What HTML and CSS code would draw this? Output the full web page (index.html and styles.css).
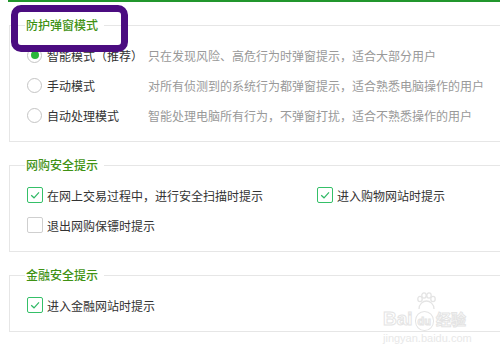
FILE: index.html
```html
<!DOCTYPE html>
<html lang="zh-CN">
<head>
  <meta charset="UTF-8">
  <meta name="viewport" content="width=device-width, initial-scale=1.0">
  <title>弹窗设置</title>
  <link rel="stylesheet" href="styles.css">
</head>
<body>
  <div id="page">
    <div class="topbar"></div>

    <fieldset class="group">
      <legend>防护弹窗模式</legend>
      <div class="row">
        <span class="radio on"></span>
        <span class="label">智能模式（推荐）</span>
        <span class="desc">只在发现风险、高危行为时弹窗提示，适合大部分用户</span>
      </div>
      <div class="row">
        <span class="radio"></span>
        <span class="label">手动模式</span>
        <span class="desc">对所有侦测到的系统行为都弹窗提示，适合熟悉电脑操作的用户</span>
      </div>
      <div class="row">
        <span class="radio"></span>
        <span class="label">自动处理模式</span>
        <span class="desc">智能处理电脑所有行为，不弹窗打扰，适合不熟悉操作的用户</span>
      </div>
    </fieldset>

    <fieldset class="group">
      <legend>网购安全提示</legend>
      <div class="row">
        <div class="item wide">
          <span class="check on"><svg width="14" height="14" viewBox="0 0 14 14"><path d="M3.2 7.2 L6 9.8 L11 4.4" fill="none" stroke="#2fb865" stroke-width="1.2"/></svg></span>
          在网上交易过程中，进行安全扫描时提示
        </div>
        <div class="item">
          <span class="check on"><svg width="14" height="14" viewBox="0 0 14 14"><path d="M3.2 7.2 L6 9.8 L11 4.4" fill="none" stroke="#2fb865" stroke-width="1.2"/></svg></span>
          进入购物网站时提示
        </div>
      </div>
      <div class="row">
        <div class="item">
          <span class="check"></span>
          退出网购保镖时提示
        </div>
      </div>
    </fieldset>

    <fieldset class="group">
      <legend>金融安全提示</legend>
      <div class="row">
        <div class="item">
          <span class="check on"><svg width="14" height="14" viewBox="0 0 14 14"><path d="M3.2 7.2 L6 9.8 L11 4.4" fill="none" stroke="#2fb865" stroke-width="1.2"/></svg></span>
          进入金融网站时提示
        </div>
      </div>
    </fieldset>

    <!-- 标注框 -->
    <div class="mark"></div>

    <!-- 水印 -->
    <div class="watermark">
      <svg class="paw" width="30" height="18" viewBox="0 0 30 18">
        <g fill="none" stroke="#e4e4e4" stroke-width="1.3">
          <ellipse cx="9" cy="7" rx="2.2" ry="2.6"/>
          <ellipse cx="13" cy="3.5" rx="2.2" ry="2.6"/>
          <ellipse cx="18" cy="3.5" rx="2.2" ry="2.6"/>
          <ellipse cx="22" cy="7" rx="2.2" ry="2.6"/>
          <path d="M8 17 C8 12 12 9 15.5 9 C19 9 23 12 23 17"/>
        </g>
      </svg>
      <div class="wm-line"><span class="wm-bai">Bai</span><span class="wm-du">du</span><span class="wm-cn">经验</span></div>
      <div class="wm-url">jingyan.baidu.com</div>
    </div>
  </div>
</body>
</html>
```

FILE: styles.css
```css
*{margin: 0; padding: 0; box-sizing: border-box;}

body{
  width: 500px;
  height: 350px;
  overflow: hidden;
  background: #fff;
  font-family: "Microsoft YaHei", "Noto Sans CJK SC", sans-serif;
  font-size: 12px;
  color: #333;
}

#page{
  position: relative;
  width: 540px;
  padding-left: 8px;
}

.topbar{
  height: 2px;
  background-color: #21962d;
  margin-bottom: 16px;
}

.group{
  margin: 0 0 16px 1px;
  border: 1px solid #e6e6e6;
  padding: 8px 0 11px 17px;
}

.group legend{
  margin-left: -2px;
  padding: 0 6px 0 1px;
  line-height: 14px;
  color: #3f9214;
  font-weight: 500;
}

.row{
  height: 30px;
  display: flex;
  align-items: center;
}

.radio{
  width: 15px;
  height: 15px;
  border: 1px solid #c4c4c4;
  border-radius: 50%;
  margin-right: 5px;
  display: flex;
  justify-content: center;
  align-items: center;
}

.radio.on::after{
  content: "";
  width: 8px;
  height: 8px;
  border-radius: 50%;
  background-color: #2bb53b;
}

.label{
  width: 101px;
}

.desc{
  color: #999;
}

.item{
  display: flex;
  align-items: center;
}

.item.wide{
  width: 290px;
}

.check{
  width: 16px;
  height: 16px;
  border: 1px solid #cfcfcf;
  border-radius: 2px;
  margin-right: 4px;
  display: flex;
  justify-content: center;
  align-items: center;
}

.check.on{
  border-color: #35c068;
}

.mark{
  position: absolute;
  left: 11px;
  top: 5px;
  width: 117px;
  height: 47px;
  border: 7px solid #4b0c80;
  border-radius: 10px;
}

.watermark{
  position: absolute;
  left: 383px;
  top: 292px;
  width: 100px;
  color: #fff;
}

.paw{
  display: block;
  margin-left: 28px;
}

.wm-line{
  display: flex;
  align-items: baseline;
  line-height: 18px;
  font-family: "Liberation Sans", sans-serif;
  font-weight: bold;
  -webkit-text-stroke: 1px #e4e4e4;
}

.wm-bai{
  font-size: 19px;
}

.wm-du{
  font-size: 11px;
  border: 1px solid #e4e4e4;
  border-radius: 50%;
  padding: 0 2px;
  margin: 0 2px;
}

.wm-cn{
  font-size: 15px;
  font-family: "Noto Sans CJK SC", sans-serif;
}

.wm-url{
  font-family: "Liberation Sans", sans-serif;
  font-size: 11px;
  line-height: 14px;
  color: #e8e8e8;
}
```
